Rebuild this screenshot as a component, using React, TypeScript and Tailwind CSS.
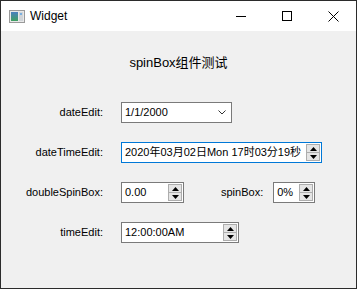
const font = "font-['Liberation_Sans','Noto_Sans_CJK_SC',sans-serif]"

function WinIcon() {
  return (
    <svg width="16" height="13" viewBox="0 0 16 13">
      <defs>
        <linearGradient id="g" x1="0" y1="0" x2="0" y2="1">
          <stop offset="0" stopColor="#4a7fc0" />
          <stop offset="1" stopColor="#3fa060" />
        </linearGradient>
      </defs>
      <rect x="0.5" y="0.5" width="15" height="12" fill="#e8e8e8" stroke="#9a9a9a" />
      <rect x="2" y="2" width="7" height="9" fill="url(#g)" />
      <rect x="10" y="2" width="4" height="9" fill="#d0d4d8" />
      <rect x="11" y="3" width="2" height="2" fill="#7ab0e0" />
    </svg>
  )
}

function SpinButtons() {
  return (
    <div className="flex h-full w-[14px] flex-col border border-[#adadad] bg-[#e5e5e5]">
      <div className="flex flex-1 items-center justify-center">
        <svg width="7" height="4" viewBox="0 0 7 4"><path d="M3.5 0 L7 4 L0 4 Z" fill="#000" /></svg>
      </div>
      <div className="h-px bg-[#adadad]" />
      <div className="flex flex-1 items-center justify-center">
        <svg width="7" height="4" viewBox="0 0 7 4"><path d="M0 0 L7 0 L3.5 4 Z" fill="#000" /></svg>
      </div>
    </div>
  )
}

function SpinField({ value, width, focused }: { value: string; width: string; focused?: boolean }) {
  return (
    <div className={`flex h-[21px] ${width} items-stretch border bg-white p-px ${focused ? 'border-[#0078d7]' : 'border-[#7a7a7a]'}`}>
      <span className="flex flex-1 items-center overflow-hidden whitespace-nowrap pl-[2px] text-[11px] leading-none">{value}</span>
      <SpinButtons />
    </div>
  )
}

function Row({ label, children }: { label: string; children: React.ReactNode }) {
  return (
    <div className="flex h-[21px] items-center">
      <span className="w-[102px] text-right text-[11px]">{label}</span>
      <div className="ml-[18px] flex items-center">{children}</div>
    </div>
  )
}

export default function App() {
  return (
    <div className={`flex h-[289px] w-[357px] flex-col border border-[#2b2b2b] bg-[#f0f0f0] text-black ${font}`}>
      <div className="flex h-[30px] items-center bg-white">
        <div className="ml-[8px] flex items-center"><WinIcon /></div>
        <span className="ml-[5px] text-[12px]">Widget</span>
        <div className="ml-auto flex h-full">
          <div className="flex w-[46px] items-center justify-center">
            <div className="h-px w-[10px] bg-black" />
          </div>
          <div className="flex w-[46px] items-center justify-center">
            <div className="h-[10px] w-[10px] border border-black" />
          </div>
          <div className="flex w-[46px] items-center justify-center">
            <svg width="11" height="11" viewBox="0 0 11 11"><path d="M0.5 0.5 L10.5 10.5 M10.5 0.5 L0.5 10.5" stroke="#000" strokeWidth="1" /></svg>
          </div>
        </div>
      </div>

      <div className="flex flex-col">
        <div className="mt-[23px] h-[18px] text-center text-[13px] leading-[18px]">spinBox组件测试</div>

        <div className="mt-[30px] flex flex-col gap-[19px]">
          <Row label="dateEdit:">
            <div className="flex h-[21px] w-[111px] items-center border border-[#7a7a7a] bg-white pl-[3px] pr-[5px]">
              <span className="flex-1 text-[11px]">1/1/2000</span>
              <svg width="8" height="5" viewBox="0 0 8 5"><path d="M0.5 0.5 L4 4 L7.5 0.5" fill="none" stroke="#333" strokeWidth="1" /></svg>
            </div>
          </Row>
          <Row label="dateTimeEdit:">
            <SpinField value="2020年03月02日Mon 17时03分19秒" width="w-[201px]" focused />
          </Row>
          <Row label="doubleSpinBox:">
            <SpinField value="0.00" width="w-[63px]" />
            <span className="ml-[37px] text-[11px]">spinBox:</span>
            <div className="ml-[10px]">
              <SpinField value="0%" width="w-[42px]" />
            </div>
          </Row>
          <Row label="timeEdit:">
            <SpinField value="12:00:00AM" width="w-[118px]" />
          </Row>
        </div>
      </div>
    </div>
  )
}
